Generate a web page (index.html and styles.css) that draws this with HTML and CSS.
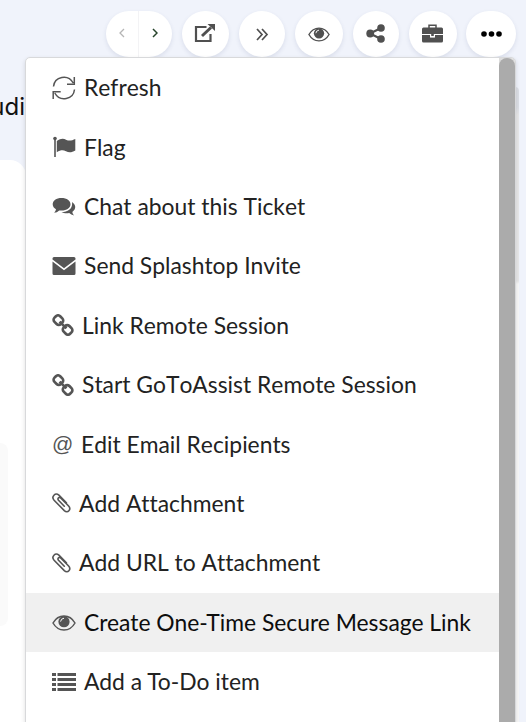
FILE: index.html
```html
<!DOCTYPE html>
<html lang="en">
<head>
    <meta charset="UTF-8">
    <meta name="viewport" content="width=device-width, initial-scale=1.0">
    <title>Ticket actions</title>
    <link rel="stylesheet" href="styles.css">
</head>
<body>
    <!-- Shared icons -->
    <svg class="icon-defs" width="0" height="0">
        <symbol id="icon-eye" viewBox="0 0 24 16">
            <path d="M1 8Q5 1 12 1T23 8Q19 15 12 15T1 8Z" fill="none" stroke="currentColor" stroke-width="1.5"/>
            <circle cx="12" cy="6.7" r="5.6" fill="currentColor"/>
            <path d="M8.6 6.6Q8.8 3.6 12 3.2" fill="none" stroke="#fff" stroke-width="1"/>
        </symbol>
        <symbol id="icon-link" viewBox="0 0 22 22">
            <g fill="none" stroke="currentColor" stroke-width="2.7">
                <rect x="1.9" y="2.1" width="9" height="8" rx="3" transform="rotate(45 6.4 6.1)"/>
                <rect x="11.1" y="11.9" width="9" height="8" rx="3" transform="rotate(45 15.6 15.9)"/>
                <path d="M7.6 7.6L14.4 14.4"/>
            </g>
        </symbol>
        <symbol id="icon-clip" viewBox="0 0 19 20">
            <path d="M12.3 13.2L6.5 7.2C4.9 5.4 7.2 3.4 8.9 5.1L16.6 13C19.6 16.4 15.8 20.9 12.3 17.6L2.1 7.2C-1.1 3.7 3.3 -1 6.9 2.2L14.4 9.9" fill="none" stroke="currentColor" stroke-width="1.6" stroke-linecap="round"/>
        </symbol>
    </svg>

    <div class="toolbar">
        <div class="pager">
            <button class="pager-button disabled" aria-label="Previous">
                <svg width="6" height="10" viewBox="0 0 6 10"><path d="M5 1L1 5L5 9" fill="none" stroke="currentColor" stroke-width="1.3"/></svg>
            </button>
            <button class="pager-button" aria-label="Next">
                <svg width="6" height="10" viewBox="0 0 6 10"><path d="M1 1L5 5L1 9" fill="none" stroke="currentColor" stroke-width="1.5"/></svg>
            </button>
        </div>
        <button class="tool-button open" aria-label="Open">
            <svg width="22" height="20" viewBox="0 0 22 20">
                <path d="M12.5 4H2V18H16.5V11" fill="none" stroke="currentColor" stroke-width="2.2"/>
                <path d="M8 13L17 4.5" fill="none" stroke="currentColor" stroke-width="3"/>
                <path d="M13.5 1H21V8Z" fill="currentColor"/>
            </svg>
        </button>
        <button class="tool-button forward" aria-label="Forward">
            <svg width="14" height="13" viewBox="0 0 14 13"><path d="M2 1L7 6.5L2 12M7 1L12 6.5L7 12" fill="none" stroke="currentColor" stroke-width="1.7"/></svg>
        </button>
        <button class="tool-button watch" aria-label="Watch">
            <svg width="22" height="15"><use href="#icon-eye"/></svg>
        </button>
        <button class="tool-button share" aria-label="Share">
            <svg width="19" height="19" viewBox="0 0 19 19">
                <path d="M15 4L4 9.5L15 15" fill="none" stroke="currentColor" stroke-width="2.2"/>
                <g fill="currentColor"><circle cx="15" cy="4" r="3.8"/><circle cx="4.2" cy="9.5" r="3.9"/><circle cx="15" cy="15" r="3.8"/></g>
            </svg>
        </button>
        <button class="tool-button case" aria-label="Tools">
            <svg width="21" height="19" viewBox="0 0 21 19">
                <path d="M7 4V1.2H14V4" fill="none" stroke="currentColor" stroke-width="1.5"/>
                <path d="M1.5 3.5H19.5Q21 3.5 21 5V10H0V5Q0 3.5 1.5 3.5Z" fill="currentColor"/>
                <path d="M0 11H8V13.5H13V11H21V17Q21 18.5 19.5 18.5H1.5Q0 18.5 0 17Z" fill="currentColor"/>
                <path d="M9.2 10H11.8V12.2H9.2Z" fill="currentColor"/>
                <path d="M8.5 10V12.7H12.5V10" fill="none" stroke="#fff" stroke-width="1"/>
            </svg>
        </button>
        <button class="tool-button more" aria-label="More">
            <svg width="21" height="6" viewBox="0 0 21 6"><circle cx="3" cy="3" r="2.8"/><circle cx="10.5" cy="3" r="2.8"/><circle cx="18" cy="3" r="2.8"/></svg>
        </button>
    </div>

    <div class="page">
        <div class="ticket">
            <div class="ticket-title">udi</div>
            <div class="ticket-panel"><div class="ticket-note"></div></div>
        </div>
        <div class="page-track"><div class="page-thumb"></div></div>
    </div>

    <div class="menu">
        <div class="menu-list">
            <a class="item">
                <svg width="24" height="24" viewBox="0 0 24 24"><path d="M1.5 10.5C2.5 .5 16 -2.5 21.2 7M22.5 13.5C21.5 23.5 8 26.5 2.8 17M22.3 1V8.3H15M1.2 23V15.7H8.7" fill="none" stroke="currentColor" stroke-width="1.5"/></svg>
                <span>Refresh</span>
            </a>
            <a class="item">
                <svg width="24" height="22" viewBox="0 0 24 22"><circle cx="3" cy="2.6" r="1.8" fill="currentColor"/><path d="M3 3V21" stroke="currentColor" stroke-width="1.6"/><path d="M4.8 5C9 2 11.5 2.2 14.5 4C17.3 5.3 20.5 4.3 23.3 3V14.5C20 16.5 17 17 14 15.3C11 13.6 8.5 14 4.8 16.2Z" fill="currentColor"/></svg>
                <span>Flag</span>
            </a>
            <a class="item chat">
                <svg width="24" height="20" viewBox="0 0 24 20"><path d="M9.5 1C14.8 1 18.5 3.7 18.5 7.3S14.8 13.6 9.5 13.6L7.2 13.4Q5 15.5 2.2 15.7Q3.8 14.3 4 12.3C2 11.2 .7 9.4 .7 7.3C.7 3.7 4.3 1 9.5 1Z" fill="currentColor"/><path d="M20 5C24.5 8 24 12.5 20.3 14.9Q20.6 17 22.2 18.5Q19 18 17.2 16.1C14.2 16.7 11.5 16.2 9.5 15C16.5 15 21 11 20 5Z" fill="currentColor"/></svg>
                <span>Chat about this Ticket</span>
            </a>
            <a class="item">
                <svg width="24" height="20" viewBox="0 0 24 20"><path d="M2 1H22Q23.5 1 23.5 2.5V3.5L12 12.3L.5 3.5V2.5Q.5 1 2 1ZM.5 5.5L12 14.3L23.5 5.5V17.5Q23.5 19 22 19H2Q.5 19 .5 17.5Z" fill="currentColor"/></svg>
                <span>Send Splashtop Invite</span>
            </a>
            <a class="item link">
                <svg width="22" height="22"><use href="#icon-link"/></svg>
                <span>Link Remote Session</span>
            </a>
            <a class="item link">
                <svg width="22" height="22"><use href="#icon-link"/></svg>
                <span>Start GoToAssist Remote Session</span>
            </a>
            <a class="item at">
                <i class="at-icon">@</i>
                <span>Edit Email Recipients</span>
            </a>
            <a class="item clip">
                <svg width="19" height="20"><use href="#icon-clip"/></svg>
                <span>Add Attachment</span>
            </a>
            <a class="item clip">
                <svg width="19" height="20"><use href="#icon-clip"/></svg>
                <span>Add URL to Attachment</span>
            </a>
            <a class="item kerned active">
                <svg width="24" height="16"><use href="#icon-eye"/></svg>
                <span>Create One-Time Secure Message Link</span>
            </a>
            <a class="item kerned">
                <svg width="24" height="18" viewBox="0 0 24 18"><path d="M0 1.5H4M5.5 1.5H24M0 6.5H4M5.5 6.5H24M0 11.5H4M5.5 11.5H24M0 16.5H4M5.5 16.5H24" stroke="currentColor" stroke-width="3"/></svg>
                <span>Add a To-Do item</span>
            </a>
        </div>
        <div class="menu-scroll"><div class="menu-thumb"></div></div>
    </div>
</body>
</html>
```

FILE: styles.css
```css
* {
    box-sizing: border-box;
}

body {
    margin: 0;
    height: 722px;
    position: relative;
    overflow: hidden;
    background: #f0f3fb;
    font-family: Lato, "Liberation Sans", sans-serif;
}

.icon-defs {
    position: absolute;
}

.toolbar {
    display: flex;
    height: 57px;
    padding: 11px 10px 0 106px;
    gap: 10px;
}

.pager {
    display: flex;
    width: 66px;
    height: 46px;
    border-radius: 23px;
    background: #fff;
    box-shadow: 0 2px 4px rgba(60, 80, 120, 0.13);
}

.pager-button,
.tool-button {
    display: flex;
    align-items: center;
    justify-content: center;
    padding: 0;
    border: none;
    background: none;
    color: #505050;
}

.pager-button {
    width: 33px;
    height: 46px;
    padding: 0 1px 2px 0;
    color: #27442b;
}

.pager-button.disabled {
    padding-right: 0;
    color: #b5b5b5;
    border-right: 1px solid #f3f3f5;
}

.tool-button {
    width: 47px;
    height: 46px;
    border-radius: 23px;
    background: #fff;
    box-shadow: 0 2px 4px rgba(60, 80, 120, 0.13);
}

.tool-button.forward,
.tool-button.share {
    width: 46px;
}

.tool-button.watch,
.tool-button.case {
    width: 48px;
}

.tool-button.open,
.tool-button.share,
.tool-button.case {
    padding: 0 2px 2px 0;
}

.tool-button.more {
    width: 50px;
    margin-left: -1px;
    color: #000;
}

.page {
    display: flex;
    justify-content: space-between;
    height: 665px;
}

.ticket {
    width: 26px;
    overflow: hidden;
}

.ticket-title {
    display: flex;
    justify-content: flex-end;
    height: 103px;
    padding: 35px 1px 0 0;
    font-family: Inter, sans-serif;
    font-size: 24px;
    line-height: 30px;
    color: #111;
}

.ticket-panel {
    height: 562px;
    padding-top: 283px;
    border-top-right-radius: 16px;
    background: #fff;
}

.ticket-note {
    width: 8px;
    height: 183px;
    border-radius: 0 16px 16px 0;
    background: #fafafa;
}

.page-track {
    width: 11px;
    padding-top: 30px;
}

.page-thumb {
    width: 4px;
    height: 635px;
    border-radius: 0 4px 0 0;
    background: linear-gradient(#dcdfe6 20px, #e8e8e9 28px, #e8e8e9 194px, #f8f8f8 197px);
}

.menu {
    position: absolute;
    top: 57px;
    left: 25px;
    display: flex;
    width: 491px;
    height: 680px;
    border: 1px solid #d8d9db;
    border-radius: 5px;
    background: #fff;
    box-shadow: 0 2px 4px rgba(34, 36, 38, 0.15);
    overflow: hidden;
}

.menu-list {
    flex: 1;
}

.item {
    display: flex;
    align-items: center;
    height: 59.4px;
    padding-left: 26px;
    gap: 8px;
    font-size: 22.85px;
    font-kerning: none;
    font-variant-ligatures: none;
    white-space: nowrap;
    color: #222;
}

.item.kerned {
    font-kerning: normal;
}

.item span {
    padding-bottom: 1px;
}

.item svg,
.at-icon {
    flex: none;
    color: #555;
}

.item.chat svg {
    margin-top: 2px;
}

.item.active {
    background: #f0f0f0;
    color: #0d0d0d;
}

.item.active svg {
    margin-top: 2px;
}

.at-icon {
    width: 21px;
    font-family: "Liberation Sans", sans-serif;
    font-size: 21px;
    font-style: normal;
}

.menu-scroll {
    width: 16px;
    background: #ddd;
}

.menu-thumb {
    height: 100%;
    border-radius: 8px;
    background: #ababab;
}
```
